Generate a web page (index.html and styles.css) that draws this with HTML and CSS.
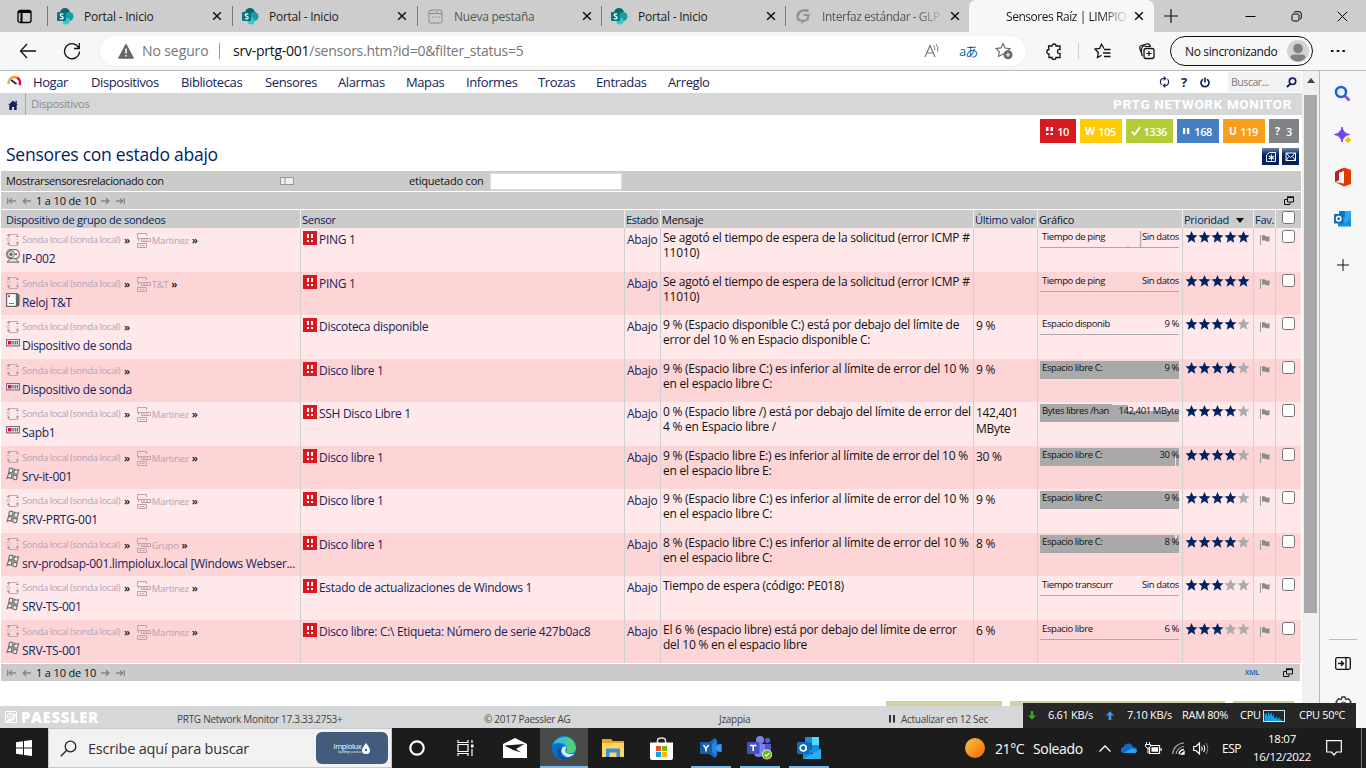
FILE: index.html
```html
<!DOCTYPE html>
<html lang="es">
<head>
<meta charset="utf-8">
<title>Sensores Raíz | LIMPIOLUX</title>
<link rel="stylesheet" href="styles.css">
</head>
<body>
<svg class="defs" width="0" height="0">
  <defs>
    <symbol id="sp" viewBox="0 0 17 17"><circle cx="8" cy="5" r="5" fill="#036c70"/><circle cx="12" cy="8.500" r="4.500" fill="#1a9ba1"/><circle cx="9" cy="13" r="3.500" fill="#37c6d0"/><rect x="0" y="4" width="9" height="9" rx="1" fill="#03787c"/><path d="M6.300 6.300C5.200 5.500 3.200 5.900 3.200 7.100C3.200 8.700 6.200 8 6.200 9.700C6.200 11 4 11.300 2.900 10.400" fill="none" stroke="#fff" stroke-width="1.200"/></symbol>
    <symbol id="x" viewBox="0 0 10 10"><path d="M1.200 1.200L8.800 8.800M8.800 1.200L1.200 8.800" stroke="#111" stroke-width="1.500"/></symbol>
    <symbol id="probe" viewBox="0 0 14 14"><path d="M3 3V1.500H11.500V4M11.500 9V12.500H3V10M2.500 5V8M11.500 6V7" fill="none" stroke="#c0aaae" stroke-width="1"/><path d="M1 2.500H4M2.500 1V4M10 3.500H13M1 10.500H4M2.500 9V12M10 10H13M11.500 8.500V11.500" stroke="#b09ca0" stroke-width="1.200"/><rect x="1" y="5.500" width="2.500" height="2.500" fill="#f8f0f0" stroke="#c0aaae" stroke-width=".6"/></symbol>
    <symbol id="group" viewBox="0 0 15 15"><path d="M5 5.500H1.500V.5H10.500V3M14.500 5.500V8.500H5.500V5.500ZM2.500 5V8M10.500 10.500V14.500H1.500V10.500Z" fill="none" stroke="#b9a5a9" stroke-width="1"/><path d="M7 7H9M10 7H12M3.500 12.500H5.500M6.500 12.500H8.500" stroke="#e882a5"/></symbol>
    <symbol id="cam" viewBox="0 0 14 14"><rect x=".7" y=".7" width="12.600" height="9" rx="4" fill="#fff" stroke="#777" stroke-width="1.200"/><circle cx="5" cy="5.200" r="3.500" fill="#eee" stroke="#666"/><circle cx="5" cy="5.200" r="1.700" fill="#666"/><circle cx="10" cy="5.200" r="1" fill="#e5005b"/><path d="M4.500 10L1 13.200H13L9.500 10" fill="#ddd" stroke="#666"/></symbol>
    <symbol id="clock" viewBox="0 0 14 14"><path d="M10 .5H12L13.500 2V12L12 13.500H10Z" fill="#666"/><rect x=".6" y=".6" width="9.800" height="12.800" fill="#fff" stroke="#666" stroke-width="1.200"/><rect x="2.200" y="2.300" width="1.800" height="1.800" fill="#e5005b"/><path d="M3 10.500H8" stroke="#777"/></symbol>
    <symbol id="dev" viewBox="0 0 14 8"><rect x=".6" y=".6" width="12.800" height="6.300" fill="#fff" stroke="#777" stroke-width="1.200"/><rect x="2" y="2" width="3.500" height="3.500" fill="#e5005b"/><path d="M7 2V5.500M9.200 2V5.500M11.300 2V5.500" stroke="#666" stroke-width="1.400"/></symbol>
    <symbol id="win" viewBox="0 0 14 14"><path d="M3.500 1.500Q5.500.5 7 2L6.200 6Q4.500 5 2.700 6ZM8.500 2.300Q10 3.500 12.500 2.700L11.500 6.800Q9.200 7.500 7.700 6.300ZM2.300 7.200Q4.500 6.200 6 7.500L5.200 11.200Q3 10 1.200 11.200ZM7.500 8Q9.200 9.200 11.300 8.400L10.400 12.300Q8 13 6.700 11.700Z" fill="#eee" stroke="#707070" stroke-width="1.200"/></symbol>
    <symbol id="down" viewBox="0 0 14 14"><rect width="14" height="14" fill="#d71920"/><path d="M4 3H6V7H4ZM8 3H10V7H8ZM4 9H6V11H4ZM8 9H10V11H8Z" fill="#fff"/></symbol>
    <symbol id="flag" viewBox="0 0 10 11"><path d="M.5 1V11" stroke="#999"/><path d="M2 1.500Q4 .5 5.500 2T9.500 2V7Q7.500 8 5.500 6.800T2 7Z" fill="#8b8b8b"/></symbol>
    <symbol id="star" viewBox="0 0 13 12"><path d="M6.500.1L8.200 4.100L12.500 4.400L9.200 7.300L10.300 11.700L6.500 9.300L2.700 11.700L3.800 7.300L.5 4.400L4.800 4.100Z"/></symbol>
    <symbol id="s5" viewBox="0 0 65 12"><g fill="#00235f"><use href="#star" width="13" height="12"/><use href="#star" x="13" width="13" height="12"/><use href="#star" x="26" width="13" height="12"/><use href="#star" x="39" width="13" height="12"/><use href="#star" x="52" width="13" height="12"/></g></symbol>
    <symbol id="s4" viewBox="0 0 65 12"><g fill="#00235f"><use href="#star" width="13" height="12"/><use href="#star" x="13" width="13" height="12"/><use href="#star" x="26" width="13" height="12"/><use href="#star" x="39" width="13" height="12"/></g><use href="#star" x="52" width="13" height="12" fill="#aaabad"/></symbol>
    <symbol id="s3" viewBox="0 0 65 12"><g fill="#00235f"><use href="#star" width="13" height="12"/><use href="#star" x="13" width="13" height="12"/><use href="#star" x="26" width="13" height="12"/></g><g fill="#aaabad"><use href="#star" x="39" width="13" height="12"/><use href="#star" x="52" width="13" height="12"/></g></symbol>
    <symbol id="first" viewBox="0 0 9 8"><path d="M.7 1V7M2 4H9M5 1.500L2.500 4L5 6.500" fill="none" stroke="#858585" stroke-width="1.300"/></symbol>
    <symbol id="prev" viewBox="0 0 9 8"><path d="M1 4H9M4 1.200L1.200 4L4 6.800" fill="none" stroke="#858585" stroke-width="1.500"/></symbol>
    <symbol id="popout" viewBox="0 0 10 9"><path d="M3.500 1H9.500V6H3.500ZM3 3.500H.5V8.500H6V6.500" fill="none" stroke="#111"/><path d="M3 1.300H10" stroke="#111" stroke-width="1.600"/></symbol>
  </defs>
</svg>

<header class="tabs">
  <div class="tab-menu"><svg width="15" height="15" viewBox="0 0 15 15"><rect x="1" y="1.500" width="13" height="12" rx="2" fill="none" stroke="#000" stroke-width="1.300"/><path d="M1 3H14M4.500 2V13.500" stroke="#000" stroke-width="2"/></svg></div>
  <div class="tab"><svg width="17" height="17"><use href="#sp"/></svg><span>Portal - Inicio</span><svg class="close" width="10" height="10"><use href="#x"/></svg></div>
  <div class="tab"><svg width="17" height="17"><use href="#sp"/></svg><span>Portal - Inicio</span><svg class="close" width="10" height="10"><use href="#x"/></svg></div>
  <div class="tab muted short"><svg width="17" height="17" viewBox="0 0 17 17"><rect x="2" y="2" width="13" height="13" rx="2" fill="none" stroke="#888"/><path d="M2.500 5.500H9L10 3.500M10 5.500H15M5 9H6.500M8 9H9.500M11 9H12.500" fill="none" stroke="#888" stroke-width="1.200"/></svg><span>Nueva pestaña</span><svg class="close" width="10" height="10"><use href="#x"/></svg></div>
  <div class="tab short"><svg width="17" height="17"><use href="#sp"/></svg><span>Portal - Inicio</span><svg class="close" width="10" height="10"><use href="#x"/></svg></div>
  <div class="tab muted short"><svg width="17" height="17" viewBox="0 0 17 17"><path d="M13.500 3C8 1 3 3.500 2.500 8C2 13 8 14 12.500 11.500L13.500 7H8.500" fill="none" stroke="#929292" stroke-width="2.200"/><path d="M13.500 2C8 1 4 4 4 7.500M13 11L6 15.500" stroke="#929292" fill="none"/></svg><span class="fade">Interfaz estándar - GLP</span><svg class="close" width="10" height="10"><use href="#x"/></svg></div>
  <div class="tab active"><i></i><span class="fade2">Sensores Raíz | LIMPIO</span><svg class="close" width="10" height="10"><use href="#x"/></svg></div>
  <svg class="newtab" width="16" height="16" viewBox="0 0 16 16"><path d="M8 1V15M1 8H15" stroke="#111" stroke-width="1.200"/></svg>
  <div class="winbtns">
    <svg width="11" height="11" viewBox="0 0 11 11"><path d="M.5 5.500H10.500" stroke="#000"/></svg>
    <svg width="11" height="11" viewBox="0 0 11 11"><rect x="1" y="3" width="7" height="7" rx="1.500" fill="none" stroke="#000"/><path d="M3 1.500Q3 .7 4.500.7H8Q10.300.7 10.300 3V6.500Q10.300 8 9 8.200" fill="none" stroke="#000"/></svg>
    <svg width="11" height="11" viewBox="0 0 11 11"><path d="M.7.7L10.300 10.300M10.300.7L.7 10.300" stroke="#000"/></svg>
  </div>
</header>

<div class="toolbar">
  <svg class="back" width="18" height="16" viewBox="0 0 18 16"><path d="M8 1L1.500 8L8 15M1.500 8H17" fill="none" stroke="#111" stroke-width="1.300"/></svg>
  <svg class="reload" width="18" height="18" viewBox="0 0 18 18"><path d="M16 6.500A7.500 7.500 0 1 0 16.500 9.500M16.300 1V6.500H11" fill="none" stroke="#111" stroke-width="1.300"/></svg>
  <div class="address">
    <svg width="16" height="16" viewBox="0 0 16 16"><path d="M8 1.500L15.200 15H.8Z" fill="#666" stroke="#666" stroke-width="1.300" stroke-linejoin="round"/><path d="M8 5.500V10.500M8 12V13.500" stroke="#f7f7f7" stroke-width="1.600"/></svg>
    <span class="nosec">No seguro</span><i></i><span class="url"><b>srv-prtg-001</b>/sensors.htm?id=0&amp;filter_status=5</span>
    <span class="aicons">
      <svg width="17" height="15" viewBox="0 0 17 15"><path d="M1 14L6 2.500L11 14M2.700 10H9.300" fill="none" stroke="#767676" stroke-width="1.200"/><path d="M9.500 2.500Q11.500 4.500 10.700 7M12 1Q15 4 13.500 8.500" fill="none" stroke="#767676"/></svg>
      <span class="aa">aあ</span>
      <svg width="18" height="18" viewBox="0 0 18 18"><path d="M8 1.500L10 6L15 6.700L11.500 10L12 14L8 12L3.500 14.500L4.400 9.800L1 6.500L6 5.900Z" fill="none" stroke="#666" stroke-width="1.100"/><circle cx="13" cy="12.800" r="4.500" fill="#666"/><path d="M13 10.500V15M10.800 12.800H15.200" stroke="#fff"/></svg>
    </span>
  </div>
  <svg class="puz" width="16" height="17" viewBox="0 0 16 17"><path d="M2.500 3H6A2 2 0 0 1 10 3H14V6.500Q11.500 6 11.500 8.500T14 10.500V14.500H10A2 2 0 0 1 6 14.500H3V11A2.200 2.200 0 0 1 3 6.500Z" fill="none" stroke="#111" stroke-width="1.300"/></svg>
  <i class="tsep"></i>
  <svg class="fav" width="17" height="16" viewBox="0 0 17 16"><path d="M10 5.500L7.500 1.200L5.600 5.500L1 6L4.300 9.500L3.500 14.500L7.600 12.300M10 6.500H16.500M9 10H16.500M10 13.500H16.500" fill="none" stroke="#111" stroke-width="1.300"/></svg>
  <svg class="coll" width="17" height="17" viewBox="0 0 17 17"><rect x="6" y="5.500" width="10" height="10" rx="2" fill="none" stroke="#111" stroke-width="1.300"/><path d="M11 8V13M8.500 10.500H13.500M4 11.500L2 6Q1 3.500 3.500 2.500L8.500 1Q11.500.3 12.500 3.500M4.500 13Q3.300 12.500 3.500 7T8 3.500H13" fill="none" stroke="#111" stroke-width="1.200"/></svg>
  <div class="sync"><span>No sincronizando</span><svg width="22" height="22" viewBox="0 0 22 22"><circle cx="11" cy="11" r="11" fill="#d5d3d1"/><circle cx="11" cy="8.500" r="4.800" fill="#83817f"/><path d="M3.500 18Q3.500 14.500 7 14.500H15Q18.500 14.500 18.500 18Q15 21.500 11 21.500T3.500 18Z" fill="#83817f"/></svg></div>
  <svg class="dots" width="14" height="4" viewBox="0 0 14 4"><path d="M0 1H2.500V3H0ZM5.700 1H8.200V3H5.700ZM11.400 1H13.900V3H11.400Z" fill="#111"/></svg>
</div>

<div class="main">
  <div class="page">
    <nav class="menu">
      <svg width="15" height="14" viewBox="0 0 15 14"><path d="M1.800 9A5.500 5.500 0 0 1 3 4" fill="none" stroke="#b4cc38" stroke-width="2.600"/><path d="M3 4.300A5.500 5.500 0 0 1 10 2.700" fill="none" stroke="#f99d1c" stroke-width="2.600"/><path d="M10 2.700A5.700 5.700 0 0 1 12.500 10" fill="none" stroke="#e5005b" stroke-width="2.600"/><path d="M4 5L9.500 9" stroke="#00235f" stroke-width="1.600"/></svg>
      <span>Hogar</span><span>Dispositivos</span><span>Bibliotecas</span><span>Sensores</span><span>Alarmas</span><span>Mapas</span><span>Informes</span><span>Trozas</span><span>Entradas</span><span>Arreglo</span>
      <svg class="m1" width="11" height="12" viewBox="0 0 11 12"><path d="M2.500 8.800A4 4 0 0 1 3.500 2.500H6.500M4.700.6L6.700 2.500L4.700 4.400M8.500 3.200A4 4 0 0 1 7.500 9.500H4.500M6.300 7.600L4.300 9.500L6.300 11.400" fill="none" stroke="#14235c" stroke-width="1.200"/></svg>
      <b class="m2">?</b>
      <svg width="10" height="11" viewBox="0 0 10 11"><path d="M3 2.300A4 4 0 1 0 7 2.300M5 .5V5.500" fill="none" stroke="#14235c" stroke-width="1.700"/></svg>
      <div class="search"><span>Buscar...</span><svg width="11" height="11" viewBox="0 0 11 11"><circle cx="6.500" cy="4.300" r="3.200" fill="none" stroke="#14235c" stroke-width="1.700"/><path d="M4.500 6.800L.8 10" stroke="#14235c" stroke-width="2"/></svg></div>
    </nav>
    <div class="crumbs">
      <div class="home"><svg width="10" height="10" viewBox="0 0 10 10"><path d="M5 .5L9.800 5H8.700V10H6V7H4V10H1.300V5H.2ZM7.500.8H8.800V4H7.500Z" fill="#14235c"/></svg></div>
      <span>Dispositivos</span><b>PRTG NETWORK MONITOR</b>
    </div>
    <div class="badges">
      <div class="bd red"><svg width="8" height="9" viewBox="0 0 8 9"><path d="M0 0H2.500V4H0ZM4.500 0H7V4H4.500ZM0 6H2.500V8H0ZM4.500 6H7V8H4.500Z" fill="#fff"/></svg><span>10</span></div>
      <div class="bd yel"><b>W</b><span>105</span></div>
      <div class="bd grn"><svg width="10" height="10" viewBox="0 0 10 10"><path d="M.8 5.500L3.500 8.500L9 1.200" fill="none" stroke="#fff" stroke-width="1.800"/></svg><span>1336</span></div>
      <div class="bd blu"><svg width="7" height="8" viewBox="0 0 7 8"><path d="M0 1H2.300V7H0ZM4 1H6.300V7H4Z" fill="#fff"/></svg><span>168</span></div>
      <div class="bd org"><b>U</b><span>119</span></div>
      <div class="bd gry"><b>?</b><span>3</span></div>
    </div>
    <div class="titlerow">
      <h1>Sensores con estado abajo</h1>
      <div class="btn"><svg width="17" height="17" viewBox="0 0 17 17"><path d="M4.500 13.500V7L7.500 4.500H13.500V13.500Z" fill="none" stroke="#fff"/><path d="M9.500 6.500V12.500M6.800 8L12.200 11M12.200 8L6.800 11" stroke="#fff" stroke-width="1.100"/></svg></div>
      <div class="btn"><svg width="17" height="17" viewBox="0 0 17 17"><path d="M4 5H13.500V12.500H4ZM4 5L8.700 9.500L13.500 5M4 12.500L7 8.500M13.500 12.500L10.500 8.500" fill="none" stroke="#fff"/></svg></div>
    </div>
    <div class="filter"><span class="f1">Mostrarsensoresrelacionado con</span><svg width="14" height="8" viewBox="0 0 14 8"><rect x=".5" y=".5" width="13" height="7" fill="#eee" stroke="#999"/><path d="M5 0V8" stroke="#999"/></svg><span class="f2">etiquetado con</span><input type="text"></div>
    <div class="pager"><svg width="9" height="8"><use href="#first"/></svg><svg width="9" height="8"><use href="#prev"/></svg><span>1 a 10 de 10</span><svg class="flip" width="9" height="8"><use href="#prev"/></svg><svg class="flip" width="9" height="8"><use href="#first"/></svg><svg class="pop" width="10" height="9"><use href="#popout"/></svg></div>

    <div class="row head"><div>Dispositivo de grupo de sondeos</div><div>Sensor</div><div>Estado</div><div class="k">Mensaje</div><div>Último valor</div><div class="k">Gráfico</div><div>Prioridad<i class="sort"></i></div><div>Fav.</div><div><span class="chk"></span></div></div>

    <div class="row">
      <div class="c1"><p><svg width="14" height="14"><use href="#probe"/></svg><span>Sonda local (sonda local)</span><b>»</b><svg class="g" width="15" height="15"><use href="#group"/></svg><em>Martinez</em><b>»</b></p><h3><svg width="14" height="14"><use href="#cam"/></svg>IP-002</h3></div>
      <div class="c2"><svg width="14" height="14"><use href="#down"/></svg>PING 1</div><div class="c3">Abajo</div>
      <div class="c4">Se agotó el tiempo de espera de la solicitud (error ICMP #<br>11010)</div><div class="c5"></div>
      <div class="c6"><div class="g line"><svg class="spike" width="16" height="18" viewBox="0 0 16 18"><path d="M14.500 18V1" stroke="#aaa" stroke-width="1.300"/><path d="M0 17.500Q2 16 4 17.500" stroke="#aaa" fill="none"/></svg><span>Tiempo de ping</span><span>Sin datos</span></div></div>
      <div class="c7"><svg width="65" height="12"><use href="#s5"/></svg></div><div class="c8"><svg width="10" height="11"><use href="#flag"/></svg></div><div><span class="chk"></span></div>
    </div>
    <div class="row alt">
      <div class="c1"><p><svg width="14" height="14"><use href="#probe"/></svg><span>Sonda local (sonda local)</span><b>»</b><svg class="g" width="15" height="15"><use href="#group"/></svg><em>T&amp;T</em><b>»</b></p><h3><svg width="14" height="14"><use href="#clock"/></svg>Reloj T&amp;T</h3></div>
      <div class="c2"><svg width="14" height="14"><use href="#down"/></svg>PING 1</div><div class="c3">Abajo</div>
      <div class="c4">Se agotó el tiempo de espera de la solicitud (error ICMP #<br>11010)</div><div class="c5"></div>
      <div class="c6"><div class="g line"><span>Tiempo de ping</span><span>Sin datos</span></div></div>
      <div class="c7"><svg width="65" height="12"><use href="#s5"/></svg></div><div class="c8"><svg width="10" height="11"><use href="#flag"/></svg></div><div><span class="chk"></span></div>
    </div>
    <div class="row">
      <div class="c1"><p><svg width="14" height="14"><use href="#probe"/></svg><span>Sonda local (sonda local)</span><b>»</b></p><h3><svg width="14" height="14"><use href="#dev"/></svg>Dispositivo de sonda</h3></div>
      <div class="c2"><svg width="14" height="14"><use href="#down"/></svg>Discoteca disponible</div><div class="c3">Abajo</div>
      <div class="c4">9 % (Espacio disponible C:) está por debajo del límite de<br>error del 10 % en Espacio disponible C:</div><div class="c5">9 %</div>
      <div class="c6"><div class="g line"><span>Espacio disponib</span><span>9 %</span></div></div>
      <div class="c7"><svg width="65" height="12"><use href="#s4"/></svg></div><div class="c8"><svg width="10" height="11"><use href="#flag"/></svg></div><div><span class="chk"></span></div>
    </div>
    <div class="row alt">
      <div class="c1"><p><svg width="14" height="14"><use href="#probe"/></svg><span>Sonda local (sonda local)</span><b>»</b></p><h3><svg width="14" height="14"><use href="#dev"/></svg>Dispositivo de sonda</h3></div>
      <div class="c2"><svg width="14" height="14"><use href="#down"/></svg>Disco libre 1</div><div class="c3">Abajo</div>
      <div class="c4">9 % (Espacio libre C:) es inferior al límite de error del 10 %<br>en el espacio libre C:</div><div class="c5">9 %</div>
      <div class="c6"><div class="g full"><span>Espacio libre C:</span><span>9 %</span></div></div>
      <div class="c7"><svg width="65" height="12"><use href="#s4"/></svg></div><div class="c8"><svg width="10" height="11"><use href="#flag"/></svg></div><div><span class="chk"></span></div>
    </div>
    <div class="row">
      <div class="c1"><p><svg width="14" height="14"><use href="#probe"/></svg><span>Sonda local (sonda local)</span><b>»</b><svg class="g" width="15" height="15"><use href="#group"/></svg><em>Martinez</em><b>»</b></p><h3><svg width="14" height="14"><use href="#dev"/></svg>Sapb1</h3></div>
      <div class="c2"><svg width="14" height="14"><use href="#down"/></svg>SSH Disco Libre 1</div><div class="c3">Abajo</div>
      <div class="c4">0 % (Espacio libre /) está por debajo del límite de error del<br>4 % en Espacio libre /</div><div class="c5">142,401<br>MByte</div>
      <div class="c6"><div class="g full step"><span>Bytes libres /han</span><span>142,401 MByte</span></div></div>
      <div class="c7"><svg width="65" height="12"><use href="#s4"/></svg></div><div class="c8"><svg width="10" height="11"><use href="#flag"/></svg></div><div><span class="chk"></span></div>
    </div>
    <div class="row alt">
      <div class="c1"><p><svg width="14" height="14"><use href="#probe"/></svg><span>Sonda local (sonda local)</span><b>»</b><svg class="g" width="15" height="15"><use href="#group"/></svg><em>Martinez</em><b>»</b></p><h3><svg width="14" height="14"><use href="#win"/></svg>Srv-it-001</h3></div>
      <div class="c2"><svg width="14" height="14"><use href="#down"/></svg>Disco libre 1</div><div class="c3">Abajo</div>
      <div class="c4">9 % (Espacio libre E:) es inferior al límite de error del 10 %<br>en el espacio libre E:</div><div class="c5">30 %</div>
      <div class="c6"><div class="g full notch-b"><span>Espacio libre C:</span><span>30 %</span></div></div>
      <div class="c7"><svg width="65" height="12"><use href="#s4"/></svg></div><div class="c8"><svg width="10" height="11"><use href="#flag"/></svg></div><div><span class="chk"></span></div>
    </div>
    <div class="row">
      <div class="c1"><p><svg width="14" height="14"><use href="#probe"/></svg><span>Sonda local (sonda local)</span><b>»</b><svg class="g" width="15" height="15"><use href="#group"/></svg><em>Martinez</em><b>»</b></p><h3><svg width="14" height="14"><use href="#win"/></svg>SRV-PRTG-001</h3></div>
      <div class="c2"><svg width="14" height="14"><use href="#down"/></svg>Disco libre 1</div><div class="c3">Abajo</div>
      <div class="c4">9 % (Espacio libre C:) es inferior al límite de error del 10 %<br>en el espacio libre C:</div><div class="c5">9 %</div>
      <div class="c6"><div class="g full"><span>Espacio libre C:</span><span>9 %</span></div></div>
      <div class="c7"><svg width="65" height="12"><use href="#s4"/></svg></div><div class="c8"><svg width="10" height="11"><use href="#flag"/></svg></div><div><span class="chk"></span></div>
    </div>
    <div class="row alt">
      <div class="c1"><p><svg width="14" height="14"><use href="#probe"/></svg><span>Sonda local (sonda local)</span><b>»</b><svg class="g" width="15" height="15"><use href="#group"/></svg><em>Grupo</em><b>»</b></p><h3><svg width="14" height="14"><use href="#win"/></svg>srv-prodsap-001.limpiolux.local [Windows Webser...</h3></div>
      <div class="c2"><svg width="14" height="14"><use href="#down"/></svg>Disco libre 1</div><div class="c3">Abajo</div>
      <div class="c4">8 % (Espacio libre C:) es inferior al límite de error del 10 %<br>en el espacio libre C:</div><div class="c5">8 %</div>
      <div class="c6"><div class="g full notch-t"><span>Espacio libre C:</span><span>8 %</span></div></div>
      <div class="c7"><svg width="65" height="12"><use href="#s4"/></svg></div><div class="c8"><svg width="10" height="11"><use href="#flag"/></svg></div><div><span class="chk"></span></div>
    </div>
    <div class="row">
      <div class="c1"><p><svg width="14" height="14"><use href="#probe"/></svg><span>Sonda local (sonda local)</span><b>»</b><svg class="g" width="15" height="15"><use href="#group"/></svg><em>Martinez</em><b>»</b></p><h3><svg width="14" height="14"><use href="#win"/></svg>SRV-TS-001</h3></div>
      <div class="c2"><svg width="14" height="14"><use href="#down"/></svg>Estado de actualizaciones de Windows 1</div><div class="c3">Abajo</div>
      <div class="c4">Tiempo de espera (código: PE018)</div><div class="c5"></div>
      <div class="c6"><div class="g line"><span>Tiempo transcurr</span><span>Sin datos</span></div></div>
      <div class="c7"><svg width="65" height="12"><use href="#s3"/></svg></div><div class="c8"><svg width="10" height="11"><use href="#flag"/></svg></div><div><span class="chk"></span></div>
    </div>
    <div class="row alt">
      <div class="c1"><p><svg width="14" height="14"><use href="#probe"/></svg><span>Sonda local (sonda local)</span><b>»</b><svg class="g" width="15" height="15"><use href="#group"/></svg><em>Martinez</em><b>»</b></p><h3><svg width="14" height="14"><use href="#win"/></svg>SRV-TS-001</h3></div>
      <div class="c2"><svg width="14" height="14"><use href="#down"/></svg>Disco libre: C:\ Etiqueta: Número de serie 427b0ac8</div><div class="c3">Abajo</div>
      <div class="c4">El 6 % (espacio libre) está por debajo del límite de error<br>del 10 % en el espacio libre</div><div class="c5">6 %</div>
      <div class="c6"><div class="g line"><span>Espacio libre</span><span>6 %</span></div></div>
      <div class="c7"><svg width="65" height="12"><use href="#s3"/></svg></div><div class="c8"><svg width="10" height="11"><use href="#flag"/></svg></div><div><span class="chk"></span></div>
    </div>

    <div class="pager bottom"><svg width="9" height="8"><use href="#first"/></svg><svg width="9" height="8"><use href="#prev"/></svg><span>1 a 10 de 10</span><svg class="flip" width="9" height="8"><use href="#prev"/></svg><svg class="flip" width="9" height="8"><use href="#first"/></svg><b class="xml">XML</b><svg class="pop" width="10" height="9"><use href="#popout"/></svg></div>
    <div class="tans"><i></i><i></i><i></i></div>
    <footer class="foot">
      <svg width="12" height="12" viewBox="0 0 12 12"><path d="M.5.5H11.500V11.500H.5Z" fill="none" stroke="#fff"/><circle cx="5.500" cy="5.500" r="3" fill="none" stroke="#fff" stroke-width="1.200"/><path d="M2 9.500Q8 12 10.500 3" fill="none" stroke="#fff" stroke-width="1.400"/><circle cx="5.500" cy="5.500" r="1" fill="#fff"/></svg>
      <b>PAESSLER</b><span>PRTG Network Monitor 17.3.33.2753+</span><span>© 2017 Paessler AG</span><span>Jzappia</span>
      <svg width="7" height="8" viewBox="0 0 7 8"><path d="M0 0H2V7.500H0ZM4 0H6V7.500H4Z" fill="#333"/></svg><span>Actualizar en 12 Sec</span>
    </footer>
  </div>
  <div class="scroll"><i class="up"></i><i class="thumb"></i></div>
  <aside class="side">
    <svg width="18" height="18" viewBox="0 0 18 18"><path d="M10.500 10.500L15.500 15.500" stroke="#a04be8" stroke-width="3"/><circle cx="7" cy="7" r="5" fill="#e6f3fc" stroke="#1b61d6" stroke-width="2.500"/></svg>
    <svg width="18" height="18" viewBox="0 0 18 18"><path d="M8 1Q9 7.500 15.500 8.500Q9 9.500 8 16Q7 9.500.5 8.500Q7 7.500 8 1Z" fill="#7446e8" stroke="#7446e8"/><path d="M14 11Q14.500 13.500 17 14Q14.500 14.500 14 17Q13.500 14.500 11 14Q13.500 13.500 14 11Z" fill="#f5b91f" stroke="#f5b91f"/></svg>
    <svg width="18" height="20" viewBox="0 0 18 20"><path d="M1 5L10 .5L17 3V17L10 19.500L1 15L10 16.500V4L5 5.500V13L1 15Z" fill="#e03c00"/><path d="M1 5L8 1.500V4.500L5 5.500V13L1 15Z" fill="#b22222"/></svg>
    <svg width="18" height="16" viewBox="0 0 18 16"><rect x="5" y="0" width="12" height="12" fill="#28a8ea"/><path d="M5 0H11V6H5Z" fill="#0f78d4"/><path d="M4 15.500V8L11 12L17 7V15.500Z" fill="#1490df"/><rect x="0" y="3" width="9.500" height="9.500" rx="1" fill="#0f6cbd"/><circle cx="4.700" cy="7.700" r="2.200" fill="none" stroke="#fff" stroke-width="1.500"/></svg>
    <svg width="14" height="14" viewBox="0 0 14 14"><path d="M7 1V13M1 7H13" stroke="#111"/></svg>
    <hr>
    <svg width="16" height="13" viewBox="0 0 16 13"><rect x=".7" y=".7" width="14.600" height="11.600" rx="1.500" fill="none" stroke="#111" stroke-width="1.300"/><path d="M11 .7V12.300M3 6.500H8M6 4L8.500 6.500L6 9" fill="none" stroke="#111" stroke-width="1.300"/></svg>
    <svg width="17" height="17" viewBox="0 0 17 17"><path d="M7 1H10L10.700 3.500L13.500 2.800L16 6L14 8.500L16 11L13.500 14.200L10.700 13.500L10 16H7L6.300 13.500L3.500 14.200L1 11L3 8.500L1 6L3.500 2.800L6.300 3.500Z" fill="none" stroke="#333" stroke-width="1.300"/><circle cx="8.500" cy="8.500" r="2.500" fill="none" stroke="#333"/></svg>
  </aside>
  <div class="meter">
    <svg width="8" height="9" viewBox="0 0 8 9"><path d="M2.700 0H5.300V4.500H8L4 8.800L0 4.500H2.700Z" fill="#35a820"/></svg><span>6.61 KB/s</span>
    <svg width="8" height="9" viewBox="0 0 8 9"><path d="M2.700 9H5.300V4.500H8L4 .2L0 4.500H2.700Z" fill="#3d9be9"/></svg><span>7.10 KB/s</span><span>RAM 80%</span><span>CPU</span>
    <svg width="22" height="12" viewBox="0 0 22 12"><rect x=".5" y=".5" width="21" height="11" fill="#182a36" stroke="#ddd"/><path d="M1.500 11V4H3V3H4V6H5V2.500H6.500V5H7.500V3H9V6H10V4.500H11V8H12.500V7H14V9H15V7.500H16.500V9.500H19V11Z" fill="#159be0"/></svg><span>CPU 50°C</span>
  </div>
</div>

<footer class="taskbar">
  <div class="start"><svg width="16" height="16" viewBox="0 0 16 16"><path d="M0 2.200L7 1.200V7.500H0ZM8 1L16 0V7.500H8ZM0 8.500H7V14.800L0 13.800ZM8 8.500H16V16L8 15Z" fill="#fff"/></svg></div>
  <div class="tsearch"><svg width="17" height="17" viewBox="0 0 17 17"><circle cx="10.500" cy="6.500" r="5.300" fill="none" stroke="#222" stroke-width="1.300"/><path d="M6.700 10.300L.8 16.200" stroke="#222" stroke-width="1.300"/></svg><span>Escribe aquí para buscar</span><div class="pill"><span><b>impiolux</b><small>building services</small></span><svg width="8" height="11" viewBox="0 0 8 11"><path d="M4 0Q8 5 8 7.500A4 3.500 0 0 1 0 7.500Q0 5 4 0Z" fill="#fff"/><circle cx="4" cy="7" r="1.200" fill="#435b7d"/></svg></div></div>
  <div class="ti w49"><svg width="18" height="18" viewBox="0 0 18 18"><circle cx="9" cy="9" r="6.700" fill="none" stroke="#fff" stroke-width="2.200"/></svg></div>
  <div class="ti w48"><svg width="17" height="16" viewBox="0 0 17 16"><path d="M1 0V2.500H11V0M1 16V13.500H11V16M1 4.500H11V11.500H1ZM15 0V3M15 9V16" fill="none" stroke="#fff" stroke-width="1.200"/><rect x="14" y="4.500" width="2.500" height="3" fill="#fff"/></svg></div>
  <div class="ti w52"><svg width="24" height="20" viewBox="0 0 24 20"><path d="M0 6L12 0L24 6V20H0Z" fill="#fff"/><path d="M1.500 7.500L21.500 6L13 11L18 14.500L10 12Z" fill="#1c1c1c"/></svg></div>
  <div class="ti act"><svg width="24" height="24" viewBox="0 0 24 24"><circle cx="12" cy="12" r="12" fill="#1389d8"/><path d="M1 8.500A12 12 0 0 1 24 12Q23.500 17 18.500 17Q15 17 14.500 15Q16 13 14.500 10.500C11.500 6 4 6 1 8.500Z" fill="#35c1d6"/><path d="M15 1A12 12 0 0 1 24 12Q23.500 17 18.500 17Q15 17 14.500 15Q18 10 12 1Z" fill="#59d45f" opacity=".75"/><path d="M0 13C0 8 8 6 12 9.500Q7.500 12 9 17T17 22.500A12 12 0 0 1 0 13Z" fill="#0b6bc0"/><path d="M14.500 11Q10.500 9.500 9.500 13.500T14 20.500T22 18Q17 18.500 14.500 17T14.500 11Z" fill="#dcecf5"/><path d="M9.500 12Q7 17 11 20.500T22 18Q19 24 12 24Q6 23 5.500 17T9.500 12Z" fill="#0d51a3"/></svg></div>
  <div class="ti w49"><svg width="22" height="18" viewBox="0 0 22 18"><path d="M0 0H9L11 2H22V18H0Z" fill="#e9a41f"/><path d="M0 4H22V18H0Z" fill="#ffd666"/><path d="M4 18V9.500H18V18H14.500V13.500H7.500V18Z" fill="#3b8fd6"/></svg></div>
  <div class="ti w49"><svg width="23" height="23" viewBox="0 0 23 23"><path d="M7.500 7V3.500Q7.500 1 11.500 1T15.500 3.500V7" fill="none" stroke="#ddd" stroke-width="1.500"/><path d="M0 5.500H23V21Q23 23 21 23H2Q0 23 0 21Z" fill="#fff"/><path d="M6 9H11V14H6Z" fill="#f25022"/><path d="M12 9H17V14H12Z" fill="#7fba00"/><path d="M6 15H11V20H6Z" fill="#00a4ef"/><path d="M12 15H17V20H12Z" fill="#ffb900"/></svg></div>
  <div class="ti w49 run"><svg width="22" height="20" viewBox="0 0 22 20"><path d="M8 5L15 0L17 2V6L21.500 6V14H17V18L15 20L8 15Z" fill="#1769c6"/><path d="M11 10L21.500 6V14Z" fill="#3d9cf0"/><path d="M10 10L16 1V19Z" fill="#2a84df"/><rect y="4" width="12" height="12" rx="1" fill="#165dac"/><path d="M3.500 7L6 10.500V13.500M8.500 7L6 10.500" stroke="#fff" stroke-width="1.500" fill="none"/></svg></div>
  <div class="ti w49 run"><svg width="25" height="24" viewBox="0 0 25 24"><circle cx="13" cy="4" r="4" fill="#7b83eb"/><circle cx="20.500" cy="4.500" r="2.700" fill="#5059c9"/><path d="M8 8H24V15Q24 20 18 20.500T8 17Z" fill="#5059c9"/><path d="M8 8H18V16Q17 21 12 21T7 17Z" fill="#7b83eb"/><rect y="6" width="12.500" height="12" rx="1" fill="#4750b8"/><path d="M3 9.500H9.500M6.200 9.500V15" stroke="#fff" stroke-width="1.600"/><circle cx="20" cy="18.500" r="5" fill="#fff"/><circle cx="20" cy="18.500" r="4.200" fill="#6bb700"/><path d="M17.800 18.500L19.500 20.200L22.300 17" stroke="#fff" fill="none" stroke-width="1.200"/></svg></div>
  <div class="ti w49 run"><svg width="24" height="22" viewBox="0 0 24 22"><rect x="8" y="0" width="14" height="16" fill="#1490df"/><rect x="15" y="0" width="7" height="8" fill="#50d9ff"/><path d="M8 6H15V13H8Z" fill="#0364b8"/><path d="M6 22V12L15 17L24 11V22Z" fill="#1a8ae0"/><path d="M6 22L24 12V22Z" fill="#37a9ee"/><rect y="5" width="12.500" height="12" rx="1" fill="#0f6cbd"/><circle cx="6.200" cy="11" r="3" fill="none" stroke="#fff" stroke-width="1.700"/></svg></div>
  <div class="tray">
    <i class="sun"></i><span class="wx">21°C</span><span class="wy">Soleado</span>
    <svg class="t1" width="12" height="7" viewBox="0 0 12 7"><path d="M.5 6.500L6 1L11.500 6.500" fill="none" stroke="#fff" stroke-width="1.300"/></svg>
    <svg class="t2" width="16" height="10" viewBox="0 0 16 10"><path d="M3 10A3 3 0 0 1 2.500 4Q4 0 8 .5Q11 .5 12 4Q16 4 16 7.500Q15.500 10 13 10Z" fill="#0f6cc8"/><path d="M3 10L10 5.500L15.500 6.500Q16.500 10 13 10Z" fill="#2aa5ee"/></svg>
    <svg class="t3" width="17" height="13" viewBox="0 0 17 13"><path d="M4.500 3.500H14.500V11.500H4.500Z" fill="none" stroke="#fff" stroke-width="1.200"/><path d="M6.500 5.300H13V9.800H6.500ZM15.500 6H16.700V9H15.500Z" fill="#fff"/><path d="M1.500 0V2.500M4.500 0V2.500M.5 2.500H5.500V4.500L3 6.500L.5 4.500ZM3 6V11.500" stroke="#fff" fill="#1c1c1c"/></svg>
    <svg class="t4" width="13" height="13" viewBox="0 0 13 13"><path d="M.7 12A11.500 11.500 0 0 1 12 1M4 12A8.500 8.500 0 0 1 12 4.500" fill="none" stroke="#aaa" stroke-width="1.100"/><path d="M7 12A5.500 5.500 0 0 1 12 7.500M9.500 12L12 10V12Z" fill="none" stroke="#fff" stroke-width="1.400"/></svg>
    <svg class="t5" width="16" height="13" viewBox="0 0 16 13"><path d="M.7 4.500H3L6.500 1V12L3 8.500H.7Z" fill="none" stroke="#fff" stroke-width="1.200"/><path d="M8.500 4.500Q10 6.500 8.500 8.500M10.500 3Q13 6.500 10.500 10" fill="none" stroke="#fff" stroke-width="1.100"/><path d="M13 1Q16.500 6.500 13 12" fill="none" stroke="#888"/></svg>
    <span class="esp">ESP</span>
    <div class="clock"><span>18:07</span><span>16/12/2022</span></div>
    <svg class="t6" width="16" height="16" viewBox="0 0 16 16"><path d="M.7.7H15.300V12H10.500L8 15L5.500 12H.7Z" fill="none" stroke="#fff" stroke-width="1.200"/></svg>
    <i class="peek"></i>
  </div>
</footer>
</body>
</html>
```

FILE: styles.css
```css
* { box-sizing: border-box; }
body { margin: 0; width: 1366px; height: 768px; overflow: hidden; display: flex; flex-direction: column; font-family: "Open Sans", "Noto Sans", sans-serif; font-size: 12px; letter-spacing: -0.3px; color: #111; white-space: nowrap; }
svg { display: block; flex: none; }
.defs { position: absolute; }
i { font-style: normal; }
h1, h3, p { margin: 0; font-weight: 400; }

/* browser chrome */
.tabs { height: 32px; flex: none; background: #cdcdcd; display: flex; align-items: center; }
.tab-menu { width: 47px; padding-left: 17px; }
.tab { width: 185px; height: 32px; display: flex; align-items: center; padding-left: 10px; position: relative; background: linear-gradient(#777, #777) 0 6px / 1px 20px no-repeat; font-size: 12px; color: #1b1b1b; letter-spacing: -0.25px; }
.tab.short { width: 184px; }
.tab > span { width: 122px; margin-left: 10px; }
.tab .close { margin-left: 6px; }
.tab.muted { color: #555; }
.tab.active { background: #f7f7f7; border-radius: 7px 7px 0 0; padding-left: 17px; }
.tab.active > i { width: 10px; }
.tab .fade, .tab .fade2 { -webkit-mask-image: linear-gradient(90deg, #000 78%, transparent 101%); letter-spacing: -0.45px; }
.newtab { margin-left: 9px; }
.winbtns { display: flex; gap: 35px; margin-left: 66px; }
.toolbar { height: 38px; flex: none; background: #f7f7f7; display: flex; align-items: center; }
.back { margin-left: 19px; }
.reload { margin-left: 26px; }
.address { width: 926px; height: 30px; margin-left: 19px; border-radius: 15px; background: #fff; box-shadow: 0 0 2px #e4e4e4; display: flex; align-items: center; padding-left: 18px; font-size: 14px; color: #767676; line-height: 20px; }
.address > span { margin-top: -1px; }
.nosec { margin-left: 8px; width: 77px; letter-spacing: -0.1px; }
.address > i { width: 1px; height: 16px; background: #999; }
.url { margin-left: 13px; letter-spacing: -0.25px; }
.url b { font-weight: 400; color: #111; }
.aicons { display: flex; align-items: center; margin-left: auto; padding-right: 13px; }
.aa { width: 18px; margin: 0 18px 0 18px; font: 14px "Open Sans", "Noto Sans CJK JP", sans-serif; font-size: 13px; color: #0067c0; letter-spacing: -1px; line-height: 18px; }
.puz { margin-left: 20px; }
.tsep { width: 1px; height: 16px; background: #ccc; margin-left: 16px; }
.fav { margin-left: 15px; }
.coll { margin-left: 27px; }
.sync { width: 143px; height: 30px; margin-left: 15px; border: 1px solid #111; border-radius: 15px; display: flex; align-items: center; justify-content: space-between; padding: 0 3px 0 14px; letter-spacing: -0.35px; }
.dots { margin-left: 18px; }

/* main area */
.main { height: 658px; flex: none; display: flex; position: relative; border-top: 1px solid #b9b9b9; }
.page { width: 1302px; flex: none; background: #fff; }
.menu { height: 22px; display: flex; align-items: center; padding-left: 7px; font-size: 13px; color: #14235c; letter-spacing: -0.4px; }
.menu > span { width: 58px; line-height: 18px; margin-top: -1px; }
.menu > span:nth-of-type(1) { margin-left: 11px; }
.menu > span:nth-of-type(2) { width: 90px; }
.menu > span:nth-of-type(3) { width: 84px; }
.menu > span:nth-of-type(4) { width: 73px; }
.menu > span:nth-of-type(5) { width: 68px; }
.menu > span:nth-of-type(6) { width: 60px; }
.menu > span:nth-of-type(7) { width: 72px; }
.menu > span:nth-of-type(9) { width: 72px; }
.m1 { margin-left: auto; }
.m2 { margin: 0 12px 0 11px; width: 7px; }
.search { width: 73px; height: 20px; margin-left: 18px; margin-right: 1px; background: #f2f2f2; display: flex; align-items: center; justify-content: space-between; padding: 0 4px 0 3px; font-size: 10.5px; color: #777; letter-spacing: -0.45px; }
.crumbs { height: 22px; background: #d6d7d9; display: flex; align-items: center; font-size: 11px; color: #8a8a8a; letter-spacing: -0.25px; line-height: 14px; }
.home { width: 26px; height: 22px; border-right: 1px solid #aaa; padding: 7px 0 0 8px; }
.crumbs > span { margin: -1px 0 0 5px; }
.crumbs > b { margin-left: auto; margin-right: 10px; font: 700 13.5px Roboto, sans-serif; letter-spacing: 0.65px; color: #fff; }
.badges { display: flex; justify-content: flex-end; gap: 4px; padding: 4px 3px 0 0; }
.bd { height: 24px; width: 42px; color: #fff; font-weight: 600; font-size: 11px; letter-spacing: -0.4px; display: flex; align-items: center; justify-content: space-between; padding: 0 6px; }
.bd b { font-size: 10.5px; font-weight: 700; }
.bd span { margin-right: 1px; }
.red { width: 36px; background: #d71920; }
.yel { background: #ffcb05; padding: 0 5px; }
.grn { width: 47px; background: #b4cc38; padding: 0 5px; }
.blu { background: #447fc1; }
.org { background: #f99d1c; }
.gry { width: 30px; background: #808285; }
.titlerow { height: 28px; display: flex; gap: 3px; padding: 5px 3px 0 6px; }
h1 { font-size: 17.5px; line-height: 20px; margin-right: auto; margin-top: -4px; color: #00235f; letter-spacing: -0.25px; }
.btn { width: 17px; height: 17px; background: linear-gradient(#6f83a8, #00235f 40%); }
.filter { height: 20px; margin-left: 1px; background: #cbcbcb; display: flex; align-items: center; padding-left: 5px; margin-right: 1px; font-size: 11px; letter-spacing: -0.37px; line-height: 14px; }
.filter > span { margin-top: -1px; }
.f1 { width: 274px; }
.f2 { margin-left: 115px; width: 80px; letter-spacing: -0.2px; }
.filter input { width: 132px; height: 17px; border: 1px solid #ddd; background: #fff; padding: 0; margin-left: 1px; }
.pager { height: 17px; margin: 1px 1px 0 1px; background: #cbcbcb; display: flex; align-items: center; padding-left: 6px; gap: 6px; font-size: 11px; letter-spacing: -0.15px; line-height: 14px; }
.pager span { width: 60px; margin: 0 -1px; }
.flip { transform: scaleX(-1); }
.pop { margin-left: auto; margin-right: 7px; }
.xml { margin-left: auto; font-size: 7px; letter-spacing: -0.2px; color: #0b5cad; font-weight: 600; }
.xml + .pop { margin-left: 18px; margin-right: 7px; }
.pager.bottom { margin-right: 2px; }

.row { height: 43.5px; margin: 0 1px; background: #fee8e9; display: grid; grid-template-columns: 299px 324px 36px 313px 64px 145px 71px 22px 26px; }
.row.alt { background: #fdd5d6; }
.row > div { border-left: 1px solid #cfd2d3; min-width: 0; }
.row > div:first-child { border-left: 0; }
.row.head { height: 18px; margin-top: 1px; background: #cbcbcb; color: #00235f; font-size: 11px; letter-spacing: -0.25px; line-height: 20px; }
.row.head > div { padding-left: 1px; border-color: #f1f1f1; }
.row.head > div:nth-child(3) { letter-spacing: -0.45px; }
.row.head > div:first-child { padding-left: 5px; }
.row.head .k { color: #111; }
.sort { display: inline-block; border: 4px solid transparent; border-top: 5px solid #111; border-bottom: 0; margin-left: 7px; vertical-align: 1px; }
.chk { display: block; width: 13px; height: 13px; margin: 2px 0 0 6px; border: 1px solid #767676; border-radius: 2.5px; background: #fff; }
.head .chk { margin: 1px 0 0 5px; }
.c1 { padding-left: 5px; color: #14235c; }
.c1 p { display: flex; align-items: center; height: 23px; font-size: 9.5px; letter-spacing: -0.42px; color: #b3a3b8; }
.c1 p > svg { margin-right: 2px; }
.c1 p > svg.g { margin: 2px 1px 0 6px; }
.c1 p span { width: 99px; }
.c1 p b { color: #111; font-size: 11px; font-weight: 600; margin-left: 3px; }
.c1 p em { font-style: normal; margin-top: 2px; letter-spacing: -0.25px; }
.c1 h3 { display: flex; font-size: 12px; line-height: 15px; gap: 2px; }
.c1 h3 svg { margin-top: -2px; }
.c2 { padding: 3px 0 0 2px; color: #14235c; display: flex; gap: 2px; line-height: 17px; }
.c3 { padding: 3px 0 0 2px; line-height: 17px; color: #14235c; }
.c4 { padding: 2px 0 0 2px; line-height: 15px; letter-spacing: -0.24px; }
.c5 { padding: 3px 0 0 2px; line-height: 16px; }
.c6 { padding: 2px 3px 0 2px; }
.c6 .g { position: relative; height: 18px; display: flex; justify-content: space-between; padding-left: 2px; font-size: 9.5px; letter-spacing: -0.4px; line-height: 14px; }
.line { border-bottom: 1px solid #aaa; }
.full { background: #a9a9a9; }
.step { background: linear-gradient(#a9a9a9, #a9a9a9) 0 100% / 100% 11px no-repeat, linear-gradient(#a9a9a9, #a9a9a9) 0 0 / 72px 18px no-repeat, linear-gradient(#a9a9a9, #a9a9a9) 72px 1px / 16px 16px no-repeat; }
.notch-b { background: linear-gradient(#fdd5d6, #fdd5d6) 135px 100% / 1px 11px no-repeat, #a9a9a9; }
.notch-t { background: linear-gradient(#fdd5d6, #fdd5d6) 135px 0 / 2px 4px no-repeat, #a9a9a9; }
.spike { position: absolute; left: 86px; top: 0; }
.c7 { padding: 3px 0 0 2px; }
.c8 { padding: 6px 0 0 6px; }
.tans { height: 25px; display: flex; align-items: flex-end; padding-left: 886px; gap: 8px; }
.tans i { height: 5px; width: 116px; background: #d3cfa2; }
.tans i:nth-child(2) { width: 215px; }
.tans i:nth-child(3) { width: 61px; }
.foot { height: 22px; background: #d6d7d9; display: flex; align-items: center; padding-left: 5px; font-size: 10px; letter-spacing: -0.28px; color: #444; }
.foot > b { font-size: 15px; color: #fff; margin-left: 4px; width: 156px; letter-spacing: 0.6px; font-weight: 800; }
.foot > span { padding-top: 3px; }
.foot > svg:nth-of-type(2) { margin-right: 5px; margin-top: 3px; }
.foot > span:nth-of-type(1) { width: 307px; }
.foot > span:nth-of-type(2) { width: 235px; }
.foot > span:nth-of-type(3) { width: 170px; }

.scroll { width: 17px; flex: none; background: #f0f0f0; display: flex; flex-direction: column; align-items: center; }
.up { border: 4px solid transparent; border-bottom: 5px solid #444; border-top: 0; margin: 7px 0 12px; }
.thumb { width: 13px; height: 518px; background: #a8a8a8; }
.side { width: 47px; flex: none; background: #f7f7f7; border-left: 1px solid #b9b9b9; display: flex; flex-direction: column; align-items: center; padding-top: 14px; overflow: hidden; }
.side svg { margin-bottom: 23px; }
.side svg:nth-of-type(3) { margin-bottom: 24px; }
.side svg:nth-of-type(4) { margin-bottom: 31px; }
.side hr { width: 28px; height: 1px; border: 0; margin: 344px 0 17px; background: #bbb; flex: none; }
.side hr + svg { margin-bottom: 26px; }
.meter { position: absolute; left: 1023px; top: 632px; width: 333px; height: 25px; background: #272727; color: #fff; display: flex; align-items: center; padding-left: 5px; font-size: 11px; letter-spacing: -0.3px; line-height: 14px; }
.meter span { margin-top: -2px; }
.meter span:nth-of-type(1) { margin-left: 12px; width: 58px; }
.meter span:nth-of-type(2) { margin-left: 13px; width: 55px; }
.meter span:nth-of-type(3) { width: 58px; }
.meter span:nth-of-type(4) { width: 23px; }
.meter span:nth-of-type(5) { margin-left: 14px; }

/* taskbar */
.taskbar { height: 40px; flex: none; background: #1c1c1c; display: flex; color: #fff; }
.start { width: 48px; padding: 12px 0 0 16px; }
.tsearch { width: 344px; background: #f2f2f2; border: 1px solid #c8c8c8; display: flex; align-items: center; padding: 0 3px 0 11px; color: #333; font-size: 14.5px; }
.tsearch > span { margin-left: 11px; letter-spacing: -0.2px; }
.pill { margin-left: auto; width: 72px; height: 32px; border-radius: 6px; background: #435b7d; color: #fff; display: flex; align-items: center; justify-content: center; gap: 1px; }
.pill b { display: block; font: 7.5px/8px "Open Sans", sans-serif; letter-spacing: -0.3px; }
.pill small { display: block; font-size: 3px; line-height: 4px; text-align: right; letter-spacing: 0; }
.ti { display: flex; align-items: center; justify-content: center; width: 48px; }
.w49 { width: 49px; }
.w52 { width: 51px; }
.act { background: #4a4a4a; border-bottom: 2px solid #76b9ed; padding-top: 2px; }
.run { background: linear-gradient(#76b9ed, #76b9ed) 50% 100% / 40px 2px no-repeat; }
.tray { display: flex; align-items: center; flex: 1; padding-left: 132px; }
.sun { width: 20px; height: 20px; border-radius: 50%; background: linear-gradient(135deg, #f8c23c, #f26a0c); }
.wx { font-size: 14px; margin-left: 10px; width: 38px; letter-spacing: -0.4px; }
.wy { font-size: 14px; width: 66px; letter-spacing: -0.35px; }
.t2 { margin-left: 10px; }
.t3 { margin-left: 8px; }
.t4 { margin-left: 10px; }
.t5 { margin-left: 8px; }
.esp { margin-left: 13px; width: 30px; letter-spacing: -0.5px; }
.clock { width: 60px; text-align: center; display: flex; flex-direction: column; line-height: 18px; font-size: 11.5px; }
.t6 { margin-left: 14px; }
.peek { width: 1px; height: 40px; background: #777; margin-left: 19px; }
```
